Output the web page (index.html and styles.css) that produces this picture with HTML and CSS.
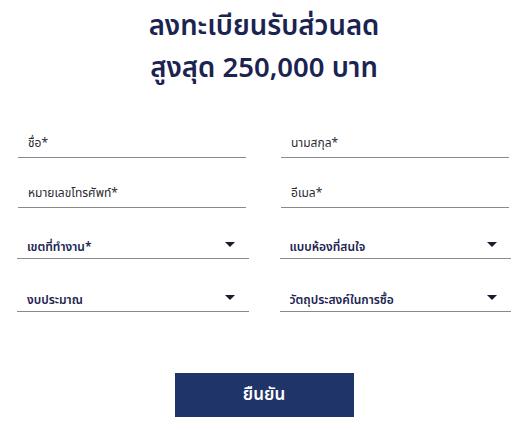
FILE: index.html
```html
<!DOCTYPE html>
<html lang="th">
<head>
    <meta charset="UTF-8">
    <meta name="viewport" content="width=device-width, initial-scale=1.0">
    <title>ลงทะเบียน</title>
    <link rel="stylesheet" href="styles.css">
</head>
<body>
    <div class="container">
        <h1>ลงทะเบียนรับส่วนลด<br>สูงสุด 250,000 บาท</h1>
        <form class="ฟอร์ม">
            <div class="แถว แถว-input">
                <label class="ช่อง"><span>ชื่อ*</span></label>
                <label class="ช่อง"><span>นามสกุล*</span></label>
            </div>
            <div class="แถว แถว-input">
                <label class="ช่อง"><span>หมายเลขโทรศัพท์*</span></label>
                <label class="ช่อง"><span>อีเมล*</span></label>
            </div>
            <div class="แถว แถว-select">
                <div class="เลือก"><span>เขตที่ทำงาน*</span><i class="ลูกศร"></i></div>
                <div class="เลือก"><span>แบบห้องที่สนใจ</span><i class="ลูกศร"></i></div>
            </div>
            <div class="แถว แถว-select">
                <div class="เลือก"><span>งบประมาณ</span><i class="ลูกศร"></i></div>
                <div class="เลือก"><span>วัตถุประสงค์ในการซื้อ</span><i class="ลูกศร"></i></div>
            </div>
            <div class="ปุ่ม-แถว">
                <button type="button" class="ยืนยัน">ยืนยัน</button>
            </div>
        </form>
    </div>
</body>
</html>
```

FILE: styles.css
```css
* {
    box-sizing: border-box;
    margin: 0;
    padding: 0;
}
body {
    background-color: #ffffff;
    font-family: "Noto Sans Thai", "Noto Sans", "DejaVu Sans", sans-serif;
}
.container {
    padding: 6px 18px 0 17px;
}
h1 {
    text-align: center;
    color: #1b2350;
    font-size: 27.5px;
    font-weight: 600;
    line-height: 42px;
}
.ฟอร์ม {
    margin-top: 30px;
}
.แถว {
    display: grid;
    grid-template-columns: 1fr 1fr;
    column-gap: 31px;
}
.แถว-input {
    margin-bottom: 12px;
    padding: 0 2px 0 1px;
    column-gap: 35px;
}
.แถว-select {
    margin-bottom: 14px;
}
.ช่อง {
    display: flex;
    align-items: flex-end;
    height: 38px;
    padding: 0 10px 5px;
    border-bottom: 1px solid #8a8a8e;
    font-size: 12px;
    line-height: 18px;
    color: #2b2b33;
}
.เลือก {
    display: flex;
    align-items: flex-end;
    justify-content: space-between;
    height: 39px;
    padding: 0 14px 2px 10px;
    border-bottom: 1px solid #8a8a8e;
    font-size: 12px;
    line-height: 18px;
    font-weight: 600;
    color: #1b2350;
}
.ลูกศร {
    width: 0;
    height: 0;
    margin-bottom: 9px;
    border-left: 5px solid transparent;
    border-right: 5px solid transparent;
    border-top: 5px solid #1b1b2a;
}
.ปุ่ม-แถว {
    display: flex;
    justify-content: center;
    padding-top: 47px;
}
.ยืนยัน {
    width: 179px;
    height: 44px;
    border: none;
    background-color: #1f3468;
    color: #ffffff;
    font-family: inherit;
    font-size: 17px;
    font-weight: 600;
}
```
